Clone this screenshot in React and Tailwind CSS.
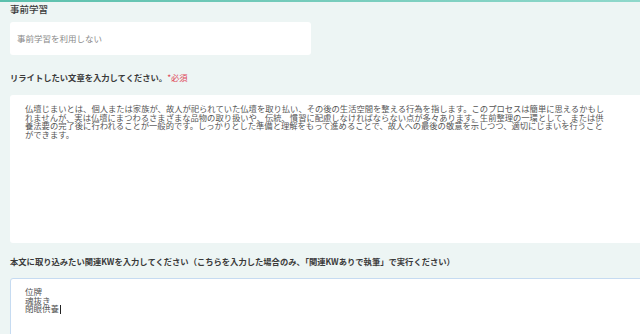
import React from 'react';

const body = [
  '仏壇じまいとは、個人または家族が、故人が祀られていた仏壇を取り払い、その後の生活空間を整える行為を指します。このプロセスは簡単に思えるかもし',
  'れませんが、実は仏壇にまつわるさまざまな品物の取り扱いや、伝統、慣習に配慮しなければならない点が多々あります。生前整理の一環として、または供',
  '養法要の完了後に行われることが一般的です。しっかりとした準備と理解をもって進めることで、故人への最後の敬意を示しつつ、適切にじまいを行うこと',
  'ができます。',
];

const keywords = ['位牌', '魂抜き', '閉眼供養'];

export default function App() {
  return (
    <div
      className="w-[640px] h-[334px] overflow-hidden bg-[#edf5f4]"
      style={{ fontFamily: '"Noto Sans CJK JP", "Noto Sans", sans-serif' }}
    >
      {/* top accent line */}
      <div className="h-[2px] bg-gradient-to-r from-[#5cc0ad] to-[#8fd8cb]" />

      <div className="pl-[10px]">
        {/* 事前学習 */}
        <div className="mt-[1px] text-[9.5px] leading-[12px] font-medium text-[#3a3a3a]">事前学習</div>
        <div className="mt-[7px] w-[301px] h-[33px] rounded-[3px] bg-white flex items-center px-[7px] text-[8.5px] text-[#8a8a8a]">
          事前学習を利用しない
        </div>

        {/* rewrite text */}
        <div className="mt-[16px] text-[8.3px] leading-[12px] font-bold text-[#3a3a3a]">
          リライトしたい文章を入力してください。
          <span className="font-normal text-[#e0485a]">*必須</span>
        </div>
        <div className="mt-[12px] w-[640px] h-[148px] rounded-[3px] bg-white pl-[15px] pt-[9px] text-[8.3px] leading-[8.6px] text-[#555] whitespace-pre">
          {body.map((line) => (
            <div key={line}>{line}</div>
          ))}
        </div>

        {/* keywords */}
        <div className="mt-[12px] text-[8.3px] leading-[12px] font-bold text-[#3a3a3a] whitespace-nowrap">
          本文に取り込みたい関連KWを入力してください（こちらを入力した場合のみ、「関連KWありで執筆」で実行ください）
        </div>
        <div className="mt-[11px] w-[640px] h-[80px] rounded-[3px] bg-white border border-[#c6dbf1] pl-[14px] pt-[8px] text-[8.5px] leading-[8.6px] text-[#555]">
          {keywords.map((k, i) => (
            <div key={k}>
              {k}
              {i === keywords.length - 1 && (
                <span className="inline-block w-[1px] h-[9px] bg-[#222] align-middle ml-[1px]" />
              )}
            </div>
          ))}
        </div>
      </div>
    </div>
  );
}
